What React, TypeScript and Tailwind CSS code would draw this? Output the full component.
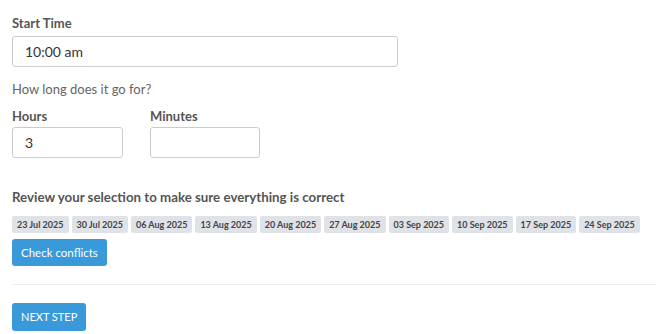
const DATES = [
  "23 Jul 2025",
  "30 Jul 2025",
  "06 Aug 2025",
  "13 Aug 2025",
  "20 Aug 2025",
  "27 Aug 2025",
  "03 Sep 2025",
  "10 Sep 2025",
  "17 Sep 2025",
  "24 Sep 2025",
];

export default function App() {
  return (
    <div className="min-h-screen bg-white pl-3 pt-[15px] font-['Lato',sans-serif] text-[#555]">
      <label className="block text-[13px] font-bold leading-[16px]">Start Time</label>
      <input
        defaultValue="10:00 am"
        className="mt-[5px] block h-[31px] w-[386px] rounded-[3px] border border-[#ccc] px-3 text-[14px] text-[#333] outline-none"
      />

      <p className="mt-[14px] text-[13px] leading-[16px] text-[#666]">How long does it go for?</p>

      <div className="mt-[11px] flex gap-[27px]">
        <div>
          <label className="block text-[13px] font-bold leading-[16px]">Hours</label>
          <input
            defaultValue="3"
            className="mt-[3px] block h-[31px] w-[111px] rounded-[3px] border border-[#ccc] px-3 text-[14px] text-[#333] outline-none"
          />
        </div>
        <div>
          <label className="block text-[13px] font-bold leading-[16px]">Minutes</label>
          <input className="mt-[3px] block h-[31px] w-[110px] rounded-[3px] border border-[#ccc] px-3 text-[14px] text-[#333] outline-none" />
        </div>
      </div>

      <p className="mt-[31px] text-[13.3px] font-bold leading-[16px]">
        Review your selection to make sure everything is correct
      </p>

      <div className="mt-[11px] flex gap-[3px]">
        {DATES.map((d) => (
          <span
            key={d}
            className="flex h-[17px] shrink-0 items-center whitespace-nowrap rounded-[2px] bg-[#dfe2e6] px-[5px] text-[9px] font-bold text-[#444]"
          >
            {d}
          </span>
        ))}
      </div>

      <button className="mt-[6px] block h-[27px] rounded-[3px] bg-[#3a9ad9] px-[9px] text-[11.5px] text-white">
        Check conflicts
      </button>

      <hr className="mt-[18px] border-t border-[#eee]" />

      <button className="mt-[18px] block h-[28px] rounded-[3px] bg-[#3a9ad9] px-[9px] text-[11px] text-white">
        NEXT STEP
      </button>
    </div>
  );
}
